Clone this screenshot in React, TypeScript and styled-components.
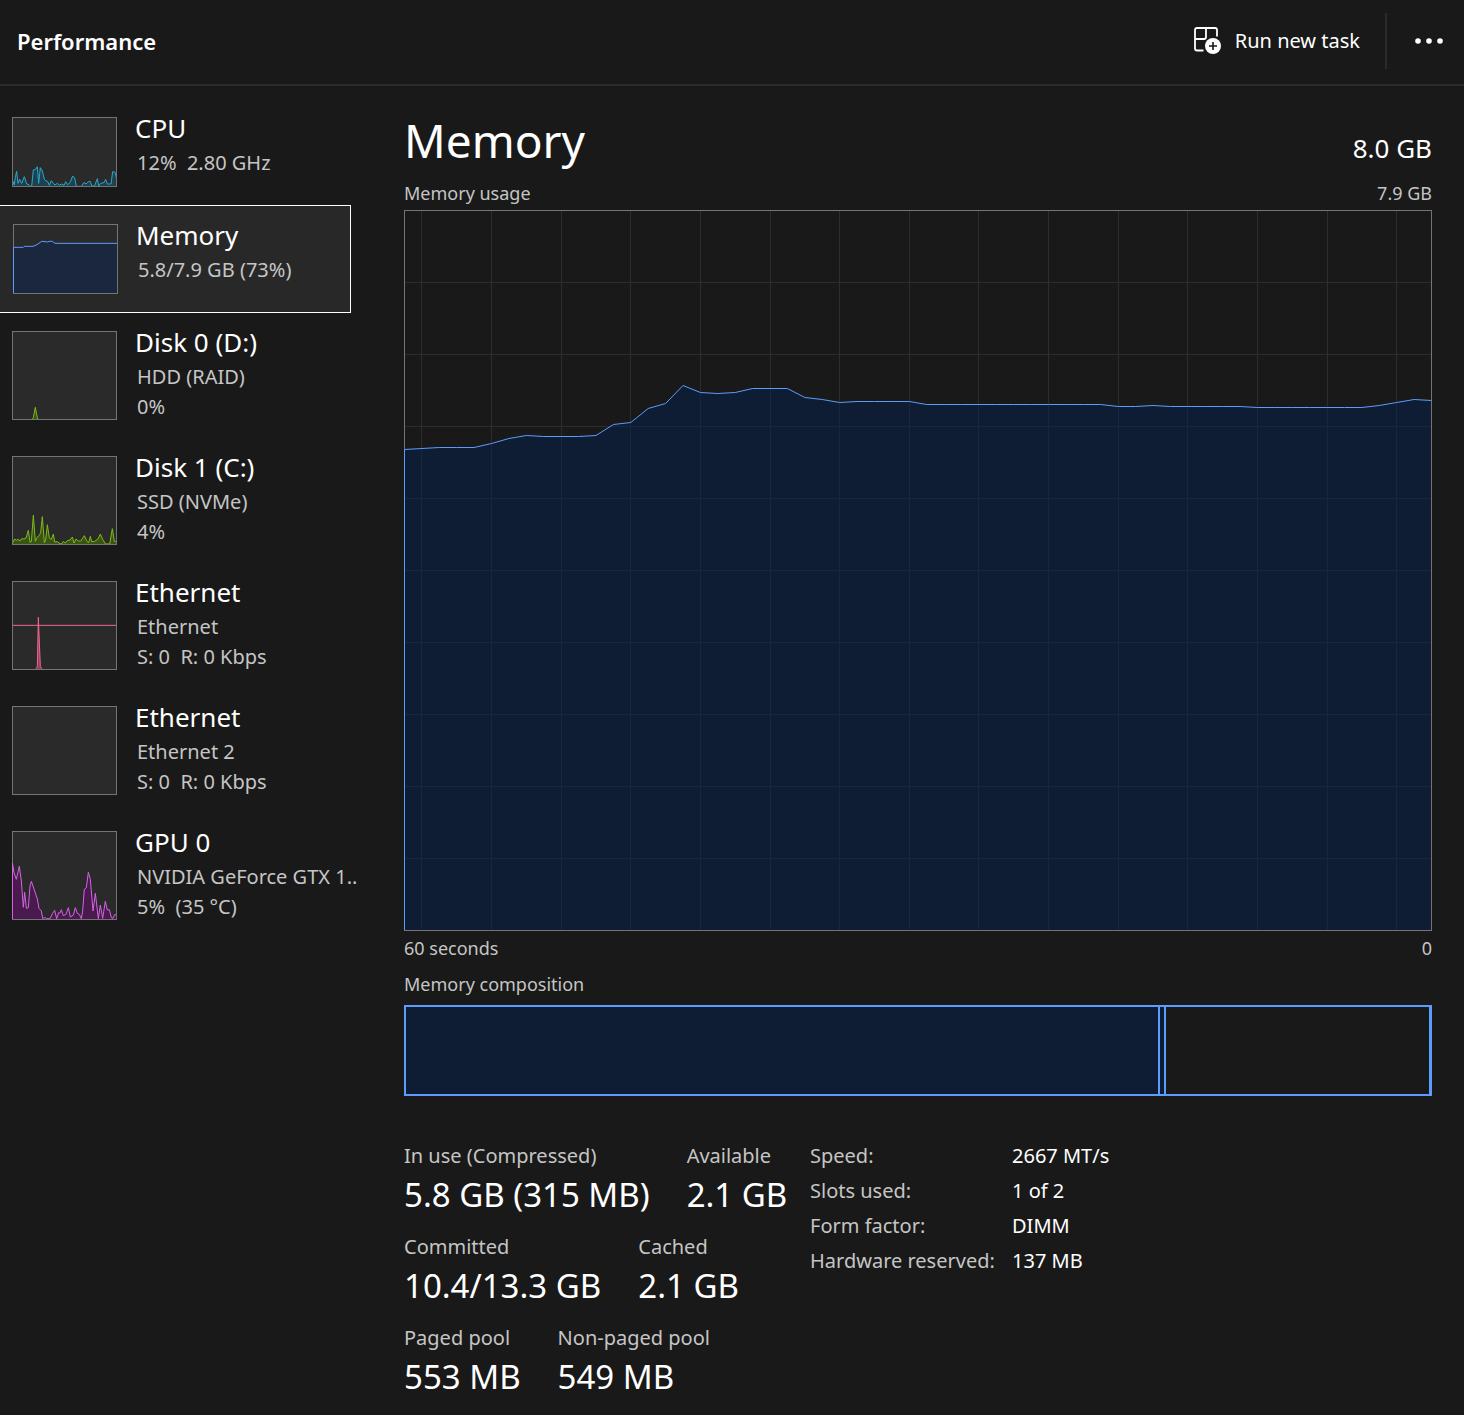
import React from "react";
import styled, { createGlobalStyle } from "styled-components";

const GlobalStyle = createGlobalStyle`
  *, *::before, *::after { box-sizing: border-box; }
  body {
    margin: 0;
    background: #191919;
    color: #ffffff;
    font-family: "Segoe UI", "Noto Sans", sans-serif;
  }
  h1, h2, h3, p, dl, dt, dd, ul { margin: 0; padding: 0; font-weight: 400; }
  button { font: inherit; color: inherit; background: none; border: 0; padding: 0; cursor: pointer; }
`;

const Header = styled.header`
  display: flex;
  align-items: center;
  justify-content: space-between;
  height: 86px;
  padding: 0 13px 3px 17px;
  border-bottom: 2px solid #2b2b2b;
`;

const PageTitle = styled.h1`
  font-size: 22px;
  line-height: 30px;
  && { font-weight: 600; }
`;

const Toolbar = styled.div`
  display: flex;
  align-items: center;
`;

const TaskButton = styled.button`
  display: flex;
  align-items: center;
  gap: 13px;
  height: 56px;
  padding-right: 25px;
  border-right: 2px solid #2b2b2b;
  font-size: 20px;
`;

const MoreButton = styled.button`
  display: flex;
  align-items: center;
  justify-content: center;
  width: 44px;
  height: 56px;
  margin-left: 20px;
`;

const Body = styled.div`
  display: flex;
  align-items: flex-start;
`;

const Sidebar = styled.nav`
  flex: 0 0 404px;
  padding-top: 12px;
`;

const ResourceList = styled.ul`
  list-style: none;
  width: 351px;
`;

const ResourceButton = styled.button<{ $active?: boolean; $tall?: boolean }>`
  display: flex;
  gap: 18px;
  width: 100%;
  height: ${(p) => (p.$active ? 108 : p.$tall ? 125 : 107)}px;
  margin-bottom: ${(p) => (p.$active ? -1 : 0)}px;
  padding-left: 12px;
  text-align: left;
  ${(p) =>
    p.$active &&
    `
    background: #282828;
    border: 1px solid #ffffff;
    border-left: 0;
    padding-left: 13px;
  `}
`;

const Thumb = styled.svg<{ $active?: boolean }>`
  flex: none;
  width: 105px;
  margin-top: ${(p) => (p.$active ? 18 : 19)}px;
`;

const ResourceText = styled.span<{ $active?: boolean }>`
  display: flex;
  flex-direction: column;
  padding-top: ${(p) => (p.$active ? 9 : 10)}px;
  white-space: pre;
`;

const ResourceName = styled.span`
  font-size: 26px;
  line-height: 40px;
`;

const ResourceDetail = styled.span`
  padding-left: 2px;
  font-size: 20px;
  line-height: 30px;
  color: #c5c5c5;
`;

const Main = styled.main`
  flex: 1;
  min-width: 0;
  padding: 18px 32px 17px 0;
`;

const Row = styled.div`
  display: flex;
  align-items: baseline;
  justify-content: space-between;
`;

const Title = styled.h2`
  font-size: 46px;
  line-height: 72px;
`;

const Total = styled.p`
  font-size: 26px;
`;

const Caption = styled.p<{ $tall?: boolean }>`
  font-size: 18px;
  line-height: ${(p) => (p.$tall ? 38 : 34)}px;
  color: #c5c5c5;
`;

const Chart = styled.svg`
  display: block;
  width: 100%;
  height: 721px;
`;

const Composition = styled.div`
  display: flex;
  height: 91px;
  margin-top: 2px;
  border: 2px solid #5c9cff;
  border-right-width: 3px;
`;

const Segment = styled.div<{ $filled?: boolean }>`
  flex-basis: 0;
  background: ${(p) => (p.$filled ? "#0e1d34" : "transparent")};
  & + & { border-left: 2px solid #5c9cff; }
`;

const Details = styled.div`
  display: flex;
  align-items: flex-start;
  margin-top: 42px;
`;

const Stats = styled.div`
  display: flex;
  flex-direction: column;
  flex: 0 0 406px;
  gap: 13px;
`;

const StatRow = styled.dl`
  display: flex;
  gap: 37px;
`;

const StatLabel = styled.dt`
  font-size: 20px;
  line-height: 36px;
  color: #c5c5c5;
  white-space: nowrap;
`;

const StatValue = styled.dd`
  font-size: 33px;
  line-height: 42px;
  white-space: nowrap;
`;

const Hardware = styled.table`
  border-collapse: collapse;
  font-size: 20px;
  line-height: 35px;
  white-space: nowrap;
  th { width: 202px; padding: 0; text-align: left; font-weight: 400; color: #c5c5c5; }
  td { padding: 0; }
`;

type Resource = {
  name: string;
  details: string[];
  color: string;
  fill: string;
  points?: string;
  rule?: number;
  active?: boolean;
};

/* Thumbnail points are in thirds of a pixel. */
const resources: Resource[] = [
  {
    name: "CPU",
    details: ["12%  2.80 GHz"],
    color: "#2ca5cc",
    fill: "#1d414d",
    points:
      "1,207 4,194 7,204 10,181 14,163 18,199 23,187 29,199 37,179 44,201 51,203 56,208 59,208 64,159 71,157 76,149 80,199 85,152 91,162 97,187 102,192 107,193 112,205 118,191 124,199 129,204 136,199 142,204 149,201 156,205 161,194 167,203 174,197 182,177 188,183 193,208 208,208 216,196 222,201 229,194 235,194 240,208 248,206 256,185 260,207 266,199 276,197 281,187 286,201 297,201 302,164 309,166 313,181",
  },
  {
    name: "Memory",
    details: ["5.8/7.9 GB (73%)"],
    color: "#5c9cff",
    fill: "#1a273e",
    active: true,
    points:
      "1,70 31,70 34,67 60,67 72,62 86,52 104,54 108,52 118,52 126,58 313,58",
  },
  {
    name: "Disk 0 (D:)",
    details: ["HDD (RAID)", "0%"],
    color: "#7db91b",
    fill: "#3c5316",
    points: "61,264 64,260 70,229 74,250 77,264",
  },
  {
    name: "Disk 1 (C:)",
    details: ["SSD (NVMe)", "4%"],
    color: "#7db91b",
    fill: "#3c5316",
    points:
      "1,262 8,249 13,253 18,250 24,255 29,248 36,249 42,246 49,223 54,259 58,257 64,178 70,256 75,244 82,238 86,230 91,182 97,260 101,252 106,206 112,246 118,250 124,234 128,258 136,257 144,263 149,264 154,256 160,261 166,254 174,252 181,243 186,261 192,249 199,255 206,255 217,239 225,256 230,260 235,241 239,257 248,256 258,249 265,234 272,250 281,264 293,264 301,218 307,256 313,257",
  },
  {
    name: "Ethernet",
    details: ["Ethernet", "S: 0  R: 0 Kbps"],
    color: "#f2668f",
    fill: "#8c3d57",
    rule: 133,
    points: "72,263 76,257 79,109 85,257 90,263",
  },
  { name: "Ethernet", details: ["Ethernet 2", "S: 0  R: 0 Kbps"], color: "#f2668f", fill: "none" },
  {
    name: "GPU 0",
    details: ["NVIDIA GeForce GTX 1..", "5%  (35 °C)"],
    color: "#d663e6",
    fill: "#491a4d",
    points:
      "1,95 6,125 13,145 22,106 28,150 34,229 38,184 43,232 49,230 54,165 58,151 64,168 76,204 81,232 88,240 92,262 100,260 104,263 114,263 122,247 128,238 134,263 140,245 144,246 148,236 154,254 162,250 169,230 175,258 184,252 190,230 196,247 202,250 208,263 212,240 217,175 223,170 229,124 235,145 243,240 250,187 259,263 265,222 272,262 280,211 286,237 292,236 298,260 303,262 308,251 313,252",
  },
];

const usage = [
  239, 238, 237, 237, 237, 233, 228, 225, 226, 226, 226, 225, 214, 212, 198, 193, 175, 182, 183, 182,
  178, 178, 178, 187, 189, 192, 191, 191, 191, 191, 194, 194, 194, 194, 194, 194, 194, 194, 194, 194,
  194, 196, 196, 195, 196, 196, 196, 196, 196, 197, 197, 197, 197, 197, 197, 197, 195, 192, 189, 190,
];

const STEP = 1027 / 59;

function ResourceThumb({ item }: { item: Resource }) {
  const height = item.details.length > 1 ? 267 : 210;
  const list = item.points?.split(" ") ?? [];
  const first = list[0]?.split(",")[0];
  const last = list[list.length - 1]?.split(",")[0];
  return (
    <Thumb $active={item.active} viewBox={`0 0 315 ${height}`} height={height / 3} aria-hidden="true">
      <rect width="315" height={height} fill="#2a2a2a" />
      {item.points && (
        <>
          <polygon points={`${first},${height} ${item.points} ${last},${height}`} fill={item.fill} />
          <polyline points={item.points} fill="none" stroke={item.color} strokeWidth="3" />
        </>
      )}
      {item.rule && <path d={`M0 ${item.rule}H315`} stroke={item.color} strokeWidth="3" />}
      <rect x="1.5" y="1.5" width="312" height={height - 3} fill="none" stroke="#747474" strokeWidth="3" />
      {item.points && Number(first) === 1 && (
        <path d={`M1.5 ${list[0].split(",")[1]}V${height - 3}`} stroke={item.color} strokeWidth="3" />
      )}
    </Thumb>
  );
}

function UsageChart() {
  const line = usage.map((y, i) => `${(i * STEP + 0.5).toFixed(2)},${y + 0.5}`).join(" ");
  const columns = Array.from({ length: 15 }, (_, i) => Math.round((1 + i * 4) * STEP) + 0.5);
  const rows = Array.from({ length: 9 }, (_, i) => (i + 1) * 72 + 0.5);
  return (
    <Chart viewBox="0 0 1028 721" preserveAspectRatio="none" role="img" aria-label="Memory usage">
      <g stroke="#2d2d2d">
        {columns.map((x) => (
          <path key={x} d={`M${x} 0V721`} />
        ))}
        {rows.map((y) => (
          <path key={y} d={`M0 ${y}H1028`} />
        ))}
      </g>
      <polygon points={`0.5,720 ${line} 1027.5,720`} fill="#03214f" fillOpacity="0.5" />
      <rect x="0.5" y="0.5" width="1027" height="720" fill="none" stroke="#747474" />
      <polyline points={`0.5,720 ${line}`} fill="none" stroke="#5c9cff" />
    </Chart>
  );
}

const stats = [
  [
    ["In use (Compressed)", "5.8 GB (315 MB)"],
    ["Available", "2.1 GB"],
  ],
  [
    ["Committed", "10.4/13.3 GB"],
    ["Cached", "2.1 GB"],
  ],
  [
    ["Paged pool", "553 MB"],
    ["Non-paged pool", "549 MB"],
  ],
];

const hardware = [
  ["Speed:", "2667 MT/s"],
  ["Slots used:", "1 of 2"],
  ["Form factor:", "DIMM"],
  ["Hardware reserved:", "137 MB"],
];

const composition = [
  { share: 752, filled: true },
  { share: 4, filled: true },
  { share: 263, filled: false },
];

export default function App() {
  return (
    <>
      <GlobalStyle />
      <Header>
        <PageTitle>Performance</PageTitle>
        <Toolbar>
          <TaskButton type="button">
            <svg width="28" height="28" viewBox="0 0 28 28" fill="none" aria-hidden="true">
              <path
                d="M9.500 23.500H3Q1 23.500 1 21.500V3Q1 1 3 1H21Q23 1 23 3V9.500M12 1V10Q12 12 10 12H1"
                stroke="#fff"
                strokeWidth="1.800"
              />
              <circle cx="19" cy="19" r="8" fill="#fff" />
              <path d="M19 15V23M15 19H23" stroke="#191919" strokeWidth="1.600" />
            </svg>
            Run new task
          </TaskButton>
          <MoreButton type="button" aria-label="More options">
            <svg width="28" height="6" viewBox="0 0 28 6" fill="#fff" aria-hidden="true">
              <circle cx="3" cy="3" r="2.800" />
              <circle cx="14" cy="3" r="2.800" />
              <circle cx="25" cy="3" r="2.800" />
            </svg>
          </MoreButton>
        </Toolbar>
      </Header>
      <Body>
        <Sidebar aria-label="Resources">
          <ResourceList>
            {resources.map((item, i) => (
              <li key={i}>
                <ResourceButton
                  type="button"
                  $active={item.active}
                  $tall={item.details.length > 1}
                  aria-current={item.active ? "true" : undefined}
                >
                  <ResourceThumb item={item} />
                  <ResourceText $active={item.active}>
                    <ResourceName>{item.name}</ResourceName>
                    {item.details.map((text) => (
                      <ResourceDetail key={text}>{text}</ResourceDetail>
                    ))}
                  </ResourceText>
                </ResourceButton>
              </li>
            ))}
          </ResourceList>
        </Sidebar>
        <Main>
          <Row>
            <Title>Memory</Title>
            <Total>8.0 GB</Total>
          </Row>
          <Row>
            <Caption>Memory usage</Caption>
            <Caption>7.9 GB</Caption>
          </Row>
          <UsageChart />
          <Row>
            <Caption>60 seconds</Caption>
            <Caption>0</Caption>
          </Row>
          <Caption $tall>Memory composition</Caption>
          <Composition>
            {composition.map((part, i) => (
              <Segment key={i} $filled={part.filled} style={{ flexGrow: part.share }} />
            ))}
          </Composition>
          <Details>
            <Stats>
              {stats.map((row, i) => (
                <StatRow key={i}>
                  {row.map(([label, value]) => (
                    <div key={label}>
                      <StatLabel>{label}</StatLabel>
                      <StatValue>{value}</StatValue>
                    </div>
                  ))}
                </StatRow>
              ))}
            </Stats>
            <Hardware>
              <tbody>
                {hardware.map(([label, value]) => (
                  <tr key={label}>
                    <th scope="row">{label}</th>
                    <td>{value}</td>
                  </tr>
                ))}
              </tbody>
            </Hardware>
          </Details>
        </Main>
      </Body>
    </>
  );
}
